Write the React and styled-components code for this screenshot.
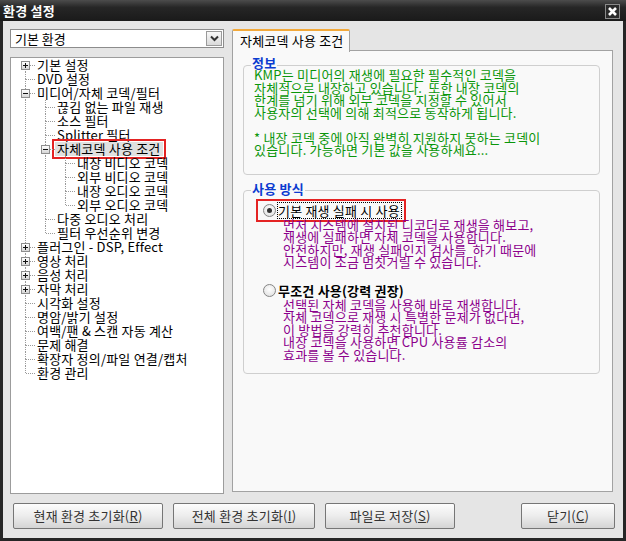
import React from 'react';
import styled, { createGlobalStyle, css } from 'styled-components';

const GlobalStyle = createGlobalStyle`
  html, body { margin: 0; padding: 0; background: #1c1c1c; }
  body {
    font-family: "Noto Sans CJK KR", "Noto Sans", sans-serif;
    font-size: 13px;
    letter-spacing: 0.2px;
    color: #000;
  }
  * { box-sizing: border-box; }
`;

const vdots = 'repeating-linear-gradient(to bottom, #9a9a9a 0 1px, transparent 1px 2px)';
const hdots = 'repeating-linear-gradient(to right, #9a9a9a 0 1px, transparent 1px 2px)';

const Window = styled.div`
  width: 626px;
  height: 541px;
  display: flex;
  flex-direction: column;
`;

const TitleBar = styled.div`
  height: 21px;
  flex: 0 0 21px;
  display: flex;
  align-items: center;
  justify-content: space-between;
  padding: 0 6px 0 3px;
  background: linear-gradient(#4c4c4c, #262626 35%, #1a1a1a);
  color: #fff;
  font-weight: bold;
  line-height: 14px;
`;

const CloseButton = styled.div`
  width: 15px;
  height: 15px;
  margin-top: 2px;
  border: 1px solid #8a8a8a;
  background: #2a2a2a;
  display: flex;
  align-items: center;
  justify-content: center;
`;

const Frame = styled.div`
  flex: 1;
  display: flex;
  flex-direction: column;
  background: #e5e5e5;
  border: 3px solid #262626;
  border-top: 0;
  padding: 8px 10px 9px 7px;
`;

const Content = styled.div`
  display: flex;
  gap: 8px;
  height: 465px;
`;

const LeftColumn = styled.div`
  width: 214px;
  display: flex;
  flex-direction: column;
  gap: 9px;
`;

const Combo = styled.div`
  height: 19px;
  display: flex;
  align-items: center;
  background: #fff;
  border: 1px solid #8c8c8c;
  padding: 0 1px 0 4px;
  letter-spacing: 0;
  line-height: 16px;
`;

const ComboText = styled.span`
  flex: 1;
`;

const ComboArrow = styled.div`
  width: 16px;
  height: 15px;
  display: flex;
  align-items: center;
  justify-content: center;
  border: 1px solid #9a9a9a;
  background: linear-gradient(#f8f8f8, #dadada);
`;

const Tree = styled.div`
  flex: 1;
  background: #fff;
  border: 1px solid #9c9c9c;
  padding: 0 0 0 4px;
`;

const Row = styled.div`
  display: flex;
  align-items: center;
  height: 14px;
`;

const Guide = styled.span`
  flex: 0 0 20px;
  height: 14px;
  ${p => p.$line && css`
    background-image: ${vdots};
    background-repeat: no-repeat;
    background-size: 1px 14px;
    background-position: 10px 0;
  `}
`;

const Connector = styled.span`
  position: relative;
  flex: 0 0 20px;
  height: 14px;
  background-image: ${vdots}, ${vdots}, ${hdots};
  background-repeat: no-repeat;
  background-size: 1px ${p => (p.$top ? '7px' : '0px')}, 1px ${p => (p.$bottom ? '7px' : '0px')}, 9px 1px;
  background-position: 10px 0, 10px 7px, 11px 7px;
`;

const Expander = styled.span`
  position: absolute;
  left: 6px;
  top: 3px;
  width: 9px;
  height: 9px;
  border: 1px solid #8e8e8e;
  background: linear-gradient(#fff, #d6d6d6);
  &::before, &::after {
    content: '';
    position: absolute;
    background: #111;
  }
  &::before { left: 1px; top: 3px; width: 5px; height: 1px; }
  &::after {
    left: 3px; top: 1px; width: 1px; height: 5px;
    display: ${p => (p.$open ? 'none' : 'block')};
  }
`;

const Label = styled.span`
  padding: 0 2px;
  height: 14px;
  line-height: 14px;
  white-space: nowrap;
  ${p => p.$selected && css`
    background: #e0e0e0;
    outline: 2px solid #e42323;
    outline-offset: 1px;
  `}
`;

const RightColumn = styled.div`
  flex: 1;
  display: flex;
  flex-direction: column;
  padding-bottom: 2px;
`;

const TabStrip = styled.div`
  display: flex;
  height: 22px;
  position: relative;
  z-index: 1;
  margin-bottom: -1px;
`;

const Tab = styled.div`
  width: 118px;
  height: 23px;
  padding: 3px 0 0 7px;
  background: #f9f9f9;
  border: 1px solid #a2a2a2;
  border-top: 2px solid #f2a93b;
  border-bottom: 0;
  border-radius: 2px 2px 0 0;
  line-height: 14px;
  white-space: nowrap;
`;

const Panel = styled.div`
  flex: 1;
  background: #f9f9f9;
  border: 1px solid #a2a2a2;
  padding: 8px 12px 0 10px;
`;

const Group = styled.fieldset`
  margin: ${p => p.$gap || 0}px 0 0 0;
  padding: 0 0 ${p => p.$bottom}px ${p => p.$left}px;
  border: 1px solid #cfcfcf;
  border-radius: 4px;
  min-width: 0;
`;

const GroupTitle = styled.legend`
  position: relative;
  top: -2px;
  margin-left: ${p => p.$shift}px;
  padding: 0 1px;
  font-weight: bold;
  color: #0b3bd0;
  line-height: 12px;
`;

const Note = styled.div`
  margin-top: ${p => p.$top || 0}px;
  padding-left: ${p => p.$indent || 0}px;
  color: ${p => p.$color};
  white-space: pre;
  line-height: 12.5px;
`;

const OptionHead = styled.div`
  display: flex;
  align-items: center;
  width: fit-content;
  height: 23px;
  margin-top: ${p => p.$top}px;
  padding: 0 2px 0 5px;
  border: 2px solid ${p => (p.$marked ? '#e42323' : 'transparent')};
`;

const Radio = styled.span`
  width: 13px;
  height: 13px;
  border-radius: 50%;
  border: 1px solid #858585;
  background: radial-gradient(circle at 50% 40%, #ffffff, #dcdcdc);
  display: flex;
  align-items: center;
  justify-content: center;
  &::after {
    content: '';
    width: 5px;
    height: 5px;
    border-radius: 50%;
    background: #333;
    display: ${p => (p.$checked ? 'block' : 'none')};
  }
`;

const OptionLabel = styled.span`
  margin-left: 1px;
  padding: 0 1px 0 0;
  line-height: 15px;
  border: 1px dotted ${p => (p.$focused ? '#000' : 'transparent')};
  font-weight: ${p => (p.$bold ? 'bold' : 'normal')};
`;

const ButtonRow = styled.div`
  display: flex;
  gap: 10px;
  margin-top: 9px;
  margin-right: -2px;
  padding-left: 3px;
`;

const Button = styled.div`
  width: ${p => p.$w}px;
  height: 26px;
  margin-left: ${p => (p.$push ? 'auto' : '0')};
  display: flex;
  align-items: center;
  justify-content: center;
  border: 1px solid #767676;
  border-radius: 2px;
  background: linear-gradient(#fdfdfd, #ececec 50%, #d4d4d4);
  color: #333;
  line-height: 14px;
  u { text-underline-offset: 1px; }
`;

const items = [
  { label: '기본 설정', level: 0, kids: true },
  { label: 'DVD 설정', level: 0 },
  { label: '미디어/자체 코덱/필터', level: 0, kids: true, open: true },
  { label: '끊김 없는 파일 재생', level: 1 },
  { label: '소스 필터', level: 1 },
  { label: 'Splitter 필터', level: 1 },
  { label: '자체코덱 사용 조건', level: 1, kids: true, open: true, selected: true },
  { label: '내장 비디오 코덱', level: 2 },
  { label: '외부 비디오 코덱', level: 2 },
  { label: '내장 오디오 코덱', level: 2 },
  { label: '외부 오디오 코덱', level: 2 },
  { label: '다중 오디오 처리', level: 1 },
  { label: '필터 우선순위 변경', level: 1 },
  { label: '플러그인 - DSP, Effect', level: 0, kids: true },
  { label: '영상 처리', level: 0, kids: true },
  { label: '음성 처리', level: 0, kids: true },
  { label: '자막 처리', level: 0, kids: true },
  { label: '시각화 설정', level: 0 },
  { label: '명암/밝기 설정', level: 0 },
  { label: '여백/팬 & 스캔 자동 계산', level: 0 },
  { label: '문제 해결', level: 0 },
  { label: '확장자 정의/파일 연결/캡처', level: 0 },
  { label: '환경 관리', level: 0 },
];

// works out which dotted lines each row needs
function buildRows(list) {
  const parents = [];
  return list.map((it, i) => {
    let last = true;
    for (let j = i + 1; j < list.length; j++) {
      if (list[j].level < it.level) break;
      if (list[j].level === it.level) { last = false; break; }
    }
    const row = { ...it, last, first: i === 0 };
    row.guides = parents.slice(0, it.level).map(p => !p.last);
    parents[it.level] = row;
    return row;
  });
}

const rows = buildRows(items);

const infoText = `KMP는 미디어의 재생에 필요한 필수적인 코덱을
자체적으로 내장하고 있습니다.  또한 내장 코덱의
한계를 넘기 위해 외부 코덱을 지정할 수 있어서
사용자의 선택에 의해 최적으로 동작하게 됩니다.

* 내장 코덱 중에 아직 완벽히 지원하지 못하는 코덱이
있습니다. 가능하면 기본 값을 사용하세요...`;

const fallbackText = `먼저 시스템에 설치된 디코더로 재생을 해보고,
재생에 실패하면 자체 코덱을 사용합니다.
안전하지만, 재생 실패인지 검사를  하기 때문에
시스템이 조금 멈칫거릴 수 있습니다.`;

const alwaysText = `선택된 자체 코덱을 사용해 바로 재생합니다.
자체 코덱으로 재생 시 특별한 문제가 없다면,
이 방법을 강력히 추천합니다.
내장 코덱을 사용하면 CPU 사용률 감소의
효과를 볼 수 있습니다.`;

export default function App() {
  return (
    <Window>
      <GlobalStyle />
      <TitleBar>
        <span>환경 설정</span>
        <CloseButton>
          <svg width="11" height="11" viewBox="0 0 11 11">
            <path d="M2 2 L9 9 M9 2 L2 9" stroke="#fff" strokeWidth="2.6" />
          </svg>
        </CloseButton>
      </TitleBar>
      <Frame>
        <Content>
          <LeftColumn>
            <Combo>
              <ComboText>기본 환경</ComboText>
              <ComboArrow>
                <svg width="9" height="7" viewBox="0 0 9 7">
                  <path d="M1 1.5 L4.5 5 L8 1.5" stroke="#333" strokeWidth="2" fill="none" />
                </svg>
              </ComboArrow>
            </Combo>
            <Tree>
              {rows.map(r => (
                <Row key={r.label}>
                  {r.guides.map((g, k) => <Guide key={k} $line={g} />)}
                  <Connector $top={!r.first} $bottom={!r.last}>
                    {r.kids && <Expander $open={r.open} />}
                  </Connector>
                  <Label $selected={r.selected}>{r.label}</Label>
                </Row>
              ))}
            </Tree>
          </LeftColumn>
          <RightColumn>
            <TabStrip>
              <Tab>자체코덱 사용 조건</Tab>
            </TabStrip>
            <Panel>
              <Group $left={10} $bottom={17}>
                <GroupTitle $shift={-3}>정보</GroupTitle>
                <Note $top={-2} $color="#0a960a">{infoText}</Note>
              </Group>
              <Group $gap={10} $left={12} $bottom={12}>
                <GroupTitle $shift={-5}>사용 방식</GroupTitle>
                <OptionHead $top={2} $marked>
                  <Radio $checked />
                  <OptionLabel $focused>기본 재생 실패 시 사용</OptionLabel>
                </OptionHead>
                <Note $top={-3} $indent={27} $color="#8c008c">{fallbackText}</Note>
                <OptionHead $top={10}>
                  <Radio />
                  <OptionLabel $bold>무조건 사용(강력 권장)</OptionLabel>
                </OptionHead>
                <Note $top={-3} $indent={27} $color="#8c008c">{alwaysText}</Note>
              </Group>
            </Panel>
          </RightColumn>
        </Content>
        <ButtonRow>
          <Button $w={150}>현재 환경 초기화(<u>R</u>)</Button>
          <Button $w={142}>전체 환경 초기화(<u>I</u>)</Button>
          <Button $w={130}>파일로 저장(<u>S</u>)</Button>
          <Button $w={94} $push>닫기(<u>C</u>)</Button>
        </ButtonRow>
      </Frame>
    </Window>
  );
}
